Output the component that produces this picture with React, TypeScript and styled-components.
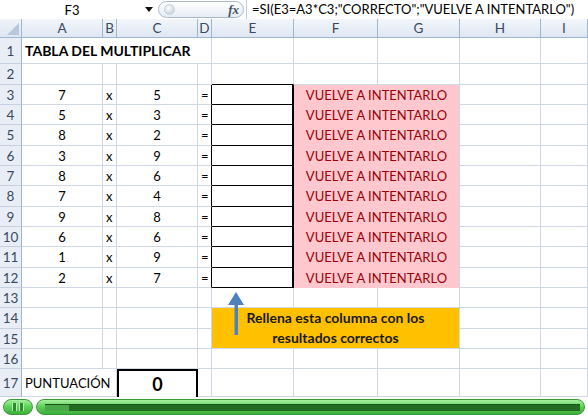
import React from "react";
import styled, { createGlobalStyle } from "styled-components";

const GlobalStyle = createGlobalStyle`
  html, body {
    margin: 0;
    padding: 0;
    background: #fff;
    overflow: hidden;
  }
  body {
    font-family: Lato, "Open Sans", sans-serif;
    font-size: 13px;
    color: #000;
  }
`;

const GRID = "#d0d7e5";
const HEAD_LINE = "#9eb6ce";

const COLUMNS = ["A", "B", "C", "D", "E", "F", "G", "H", "I"];
const ROW_HEIGHTS = [19, 26, 21, 20, 20, 21, 20, 20, 21, 20, 20, 21, 20, 20, 21, 20, 20, 28];

const PROBLEMS = [
  [7, 5],
  [5, 3],
  [8, 2],
  [3, 9],
  [8, 6],
  [7, 4],
  [9, 8],
  [6, 6],
  [1, 9],
  [2, 7],
];

const Page = styled.div`
  width: 588px;
  height: 417px;
  display: flex;
  flex-direction: column;
  overflow: hidden;
`;

const FormulaBar = styled.div`
  height: 19px;
  display: flex;
  align-items: center;
  flex-shrink: 0;
`;

const NameBox = styled.div`
  width: 144px;
  text-align: center;
  font-size: 13px;
`;

const DropArrow = styled.div`
  width: 0;
  height: 0;
  border-left: 4px solid transparent;
  border-right: 4px solid transparent;
  border-top: 5px solid #111;
  margin-left: 1px;
`;

const FxPill = styled.div`
  box-sizing: border-box;
  width: 86px;
  height: 17px;
  margin-left: 5px;
  border: 1px solid #a9b8c9;
  border-radius: 9px;
  background: linear-gradient(#ffffff, #e6ecf4);
  display: flex;
  align-items: center;
  justify-content: space-between;
  padding: 0 4px 0 5px;
`;

const Knob = styled.div`
  width: 9px;
  height: 9px;
  border-radius: 50%;
  background: radial-gradient(circle at 40% 35%, #ffffff, #b9c4d0);
  border: 1px solid #c9d2dc;
`;

const Fx = styled.span`
  font-family: "Liberation Serif", serif;
  font-style: italic;
  font-weight: bold;
  font-size: 13px;
  color: #44525f;
`;

const FormulaText = styled.div`
  margin-left: 2px;
  padding-left: 5px;
  border-left: 1px solid #c5cdd8;
  height: 19px;
  line-height: 19px;
  font-size: 13px;
  white-space: nowrap;
`;

const Sheet = styled.div`
  position: relative;
  display: grid;
  grid-template-columns: 22px 81px 14px 81px 14px 82px 84px 82px 81px 1fr;
  grid-template-rows: ${ROW_HEIGHTS.map((h) => `${h}px`).join(" ")};
  flex-shrink: 0;
`;

const Corner = styled.div`
  position: relative;
  box-sizing: border-box;
  background: linear-gradient(#f0f4fa, #dde6f2);
  border-right: 1px solid ${HEAD_LINE};
  border-bottom: 1px solid ${HEAD_LINE};
  &::after {
    content: "";
    position: absolute;
    right: 2px;
    bottom: 2px;
    width: 0;
    height: 0;
    border-left: 12px solid transparent;
    border-bottom: 12px solid #b8c8da;
  }
`;

const ColHeader = styled.div`
  box-sizing: border-box;
  background: linear-gradient(#f2f6fb, #dfe7f2);
  border-right: 1px solid ${HEAD_LINE};
  border-bottom: 1px solid ${HEAD_LINE};
  display: flex;
  align-items: center;
  justify-content: center;
  color: #394a5e;
  font-size: 13.5px;
`;

const RowHeader = styled.div`
  box-sizing: border-box;
  background: #e9eef6;
  border-right: 1px solid ${HEAD_LINE};
  border-bottom: 1px solid #c5d1e0;
  display: flex;
  align-items: center;
  justify-content: center;
  color: #394a5e;
  font-size: 13.5px;
`;

const Cell = styled.div<{
  $align?: "left" | "center";
  $bold?: boolean;
  $span?: number;
  $right?: string;
  $bottom?: string;
}>`
  box-sizing: border-box;
  grid-column: span ${(p) => p.$span ?? 1};
  border-right: 1px solid ${(p) => p.$right ?? GRID};
  border-bottom: 1px solid ${(p) => p.$bottom ?? GRID};
  display: flex;
  align-items: center;
  justify-content: ${(p) => (p.$align === "center" ? "center" : "flex-start")};
  padding: 0 3px;
  white-space: nowrap;
  font-weight: ${(p) => (p.$bold ? "bold" : "normal")};
  font-size: ${(p) => (p.$bold ? "14px" : "13px")};
`;

const AnswerCell = styled(Cell)`
  border-right: 2px solid #000;
  border-bottom-color: #000;
`;

const RetryCell = styled(Cell)`
  grid-column: span 2;
  justify-content: center;
  background: #ffc7ce;
  color: #9c0006;
  border-bottom-color: transparent;
`;

const ScoreCell = styled(Cell)`
  border: 2px solid #000;
  border-bottom: none;
  justify-content: center;
  font-weight: bold;
  font-size: 18px;
`;

const Note = styled.div`
  box-sizing: border-box;
  grid-column: 6 / span 3;
  grid-row: 15 / span 2;
  background: #ffc000;
  border-right: 1px solid ${GRID};
  border-bottom: 1px solid ${GRID};
  display: flex;
  flex-direction: column;
  align-items: center;
  justify-content: center;
  font-weight: bold;
  font-size: 14px;
  line-height: 20px;
  color: #1a1a1a;
`;

const Arrow = styled.svg`
  position: absolute;
  left: 228px;
  top: 273px;
`;

const PlayerBar = styled.div`
  flex: 1;
  display: flex;
  align-items: center;
  gap: 3px;
  padding: 0 3px;
`;

const GreenPill = styled.div`
  box-sizing: border-box;
  height: 16px;
  border-radius: 8px;
  border: 1px solid #3a9a3a;
  background: linear-gradient(#a8f0a0, #5fd35a 45%, #3fae3c);
  display: flex;
  align-items: center;
`;

const PauseButton = styled(GreenPill)`
  width: 30px;
  justify-content: center;
  gap: 2px;
`;

const PauseBar = styled.span`
  width: 3px;
  height: 8px;
  background: #2f8a2f;
  border: 1px solid #b6f0b0;
  border-top: none;
  border-bottom: none;
`;

const Track = styled(GreenPill)`
  flex: 1;
  padding: 0 4px 0 8px;
`;

const Groove = styled.div`
  flex: 1;
  height: 6px;
  background: #236b23;
  border-top: 1px solid #1a541a;
  display: flex;
`;

const Progress = styled.div`
  height: 100%;
  background: #4aa847;
`;

function SheetGrid() {
  const rows: React.ReactNode[] = [];

  rows.push(<Corner key="corner" />);
  COLUMNS.forEach((c) => rows.push(<ColHeader key={`h${c}`}>{c}</ColHeader>));

  // row 1
  rows.push(<RowHeader key="r1">1</RowHeader>);
  rows.push(
    <Cell key="a1" $bold $span={4}>
      TABLA DEL MULTIPLICAR
    </Cell>
  );
  ["E", "F", "G", "H", "I"].forEach((c) => rows.push(<Cell key={`${c}1`} />));

  // row 2
  rows.push(<RowHeader key="r2">2</RowHeader>);
  COLUMNS.forEach((c) =>
    rows.push(<Cell key={`${c}2`} $bottom={c === "E" ? "#000" : undefined} />)
  );

  PROBLEMS.forEach(([a, b], i) => {
    const r = i + 3;
    rows.push(<RowHeader key={`r${r}`}>{r}</RowHeader>);
    rows.push(
      <Cell key={`a${r}`} $align="center">
        {a}
      </Cell>
    );
    rows.push(<Cell key={`b${r}`}>x</Cell>);
    rows.push(
      <Cell key={`c${r}`} $align="center">
        {b}
      </Cell>
    );
    rows.push(
      <Cell key={`d${r}`} $right="#000">
        =
      </Cell>
    );
    rows.push(<AnswerCell key={`e${r}`} />);
    rows.push(<RetryCell key={`f${r}`}>VUELVE A INTENTARLO</RetryCell>);
    rows.push(<Cell key={`h${r}`} />);
    rows.push(<Cell key={`i${r}`} />);
  });

  for (let r = 13; r <= 16; r++) {
    rows.push(<RowHeader key={`r${r}`}>{r}</RowHeader>);
    const cols = r === 14 || r === 15 ? ["A", "B", "C", "D", "H", "I"] : COLUMNS;
    cols.forEach((c) => rows.push(<Cell key={`${c}${r}`} />));
  }

  rows.push(<RowHeader key="r17">17</RowHeader>);
  rows.push(
    <Cell key="a17" $span={2}>
      PUNTUACIÓN
    </Cell>
  );
  rows.push(<ScoreCell key="c17">0</ScoreCell>);
  ["D", "E", "F", "G", "H", "I"].forEach((c) => rows.push(<Cell key={`${c}17`} />));

  return (
    <Sheet>
      {rows}
      <Note>
        <span>Rellena esta columna con los</span>
        <span>resultados correctos</span>
      </Note>
      <Arrow width="16" height="43" viewBox="0 0 16 43">
        <polygon points="8,0 0,13 16,13" fill="#4f81bd" />
        <rect x="6.5" y="12" width="3.5" height="31" fill="#4f81bd" />
      </Arrow>
    </Sheet>
  );
}

export default function App() {
  return (
    <Page>
      <GlobalStyle />
      <FormulaBar>
        <NameBox>F3</NameBox>
        <DropArrow />
        <FxPill>
          <Knob />
          <Fx>fx</Fx>
        </FxPill>
        <FormulaText>=SI(E3=A3*C3;"CORRECTO";"VUELVE A INTENTARLO")</FormulaText>
      </FormulaBar>
      <SheetGrid />
      <PlayerBar>
        <PauseButton>
          <PauseBar />
          <PauseBar />
        </PauseButton>
        <Track>
          <Groove>
            <Progress style={{ width: "4.4%" }} />
          </Groove>
        </Track>
      </PlayerBar>
    </Page>
  );
}
